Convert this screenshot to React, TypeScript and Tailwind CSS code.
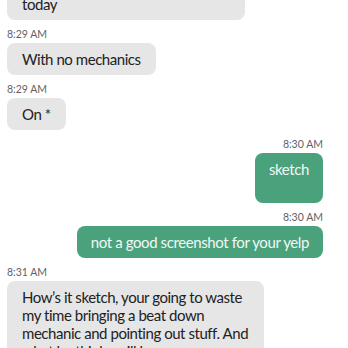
import React from "react";

const font = { fontFamily: "Lato, 'Noto Sans', sans-serif" };

function Ts({ t, right }: { t: string; right?: boolean }) {
  return (
    <div
      className={`mt-[6px] mb-[1px] text-[10.5px] leading-[16px] text-[#5f5f5f] ${right ? "text-right" : ""}`}
    >
      {t}
    </div>
  );
}

function Left({ children, className = "" }: { children: React.ReactNode; className?: string }) {
  return (
    <div className="flex justify-start">
      <div
        className={`max-w-[257px] rounded-[8px] bg-[#e6e6e6] px-[15px] py-[7px] text-[15px] leading-[18px] tracking-[-0.45px] text-[#222222] ${className}`}
      >
        {children}
      </div>
    </div>
  );
}

function Right({ children, className = "" }: { children: React.ReactNode; className?: string }) {
  return (
    <div className="flex justify-end">
      <div
        className={`rounded-[8px] bg-[#4aa27d] px-[14px] py-[7px] text-[15px] leading-[18px] tracking-[-0.4px] text-[#f2f7f4] ${className}`}
      >
        {children}
      </div>
    </div>
  );
}

export default function App() {
  return (
    <div className="h-[348px] w-[348px] overflow-hidden bg-white" style={font}>
      <div className="-mt-[12px] pl-[7px] pr-[25px]">
        <Left className="w-[238px]">today</Left>
        <Ts t="8:29 AM" />
        <Left>With no mechanics</Left>
        <Ts t="8:29 AM" />
        <Left>On *</Left>
        <Ts t="8:30 AM" right />
        <Right>
          sketch
          <br />
          {"\u00a0"}
        </Right>
        <Ts t="8:30 AM" right />
        <Right>not a good screenshot for your yelp</Right>
        <Ts t="8:31 AM" />
        <Left>
          How’s it sketch, your going to waste my time bringing a beat down mechanic and pointing out stuff. And what he thinks will be wrong
        </Left>
      </div>
    </div>
  );
}
